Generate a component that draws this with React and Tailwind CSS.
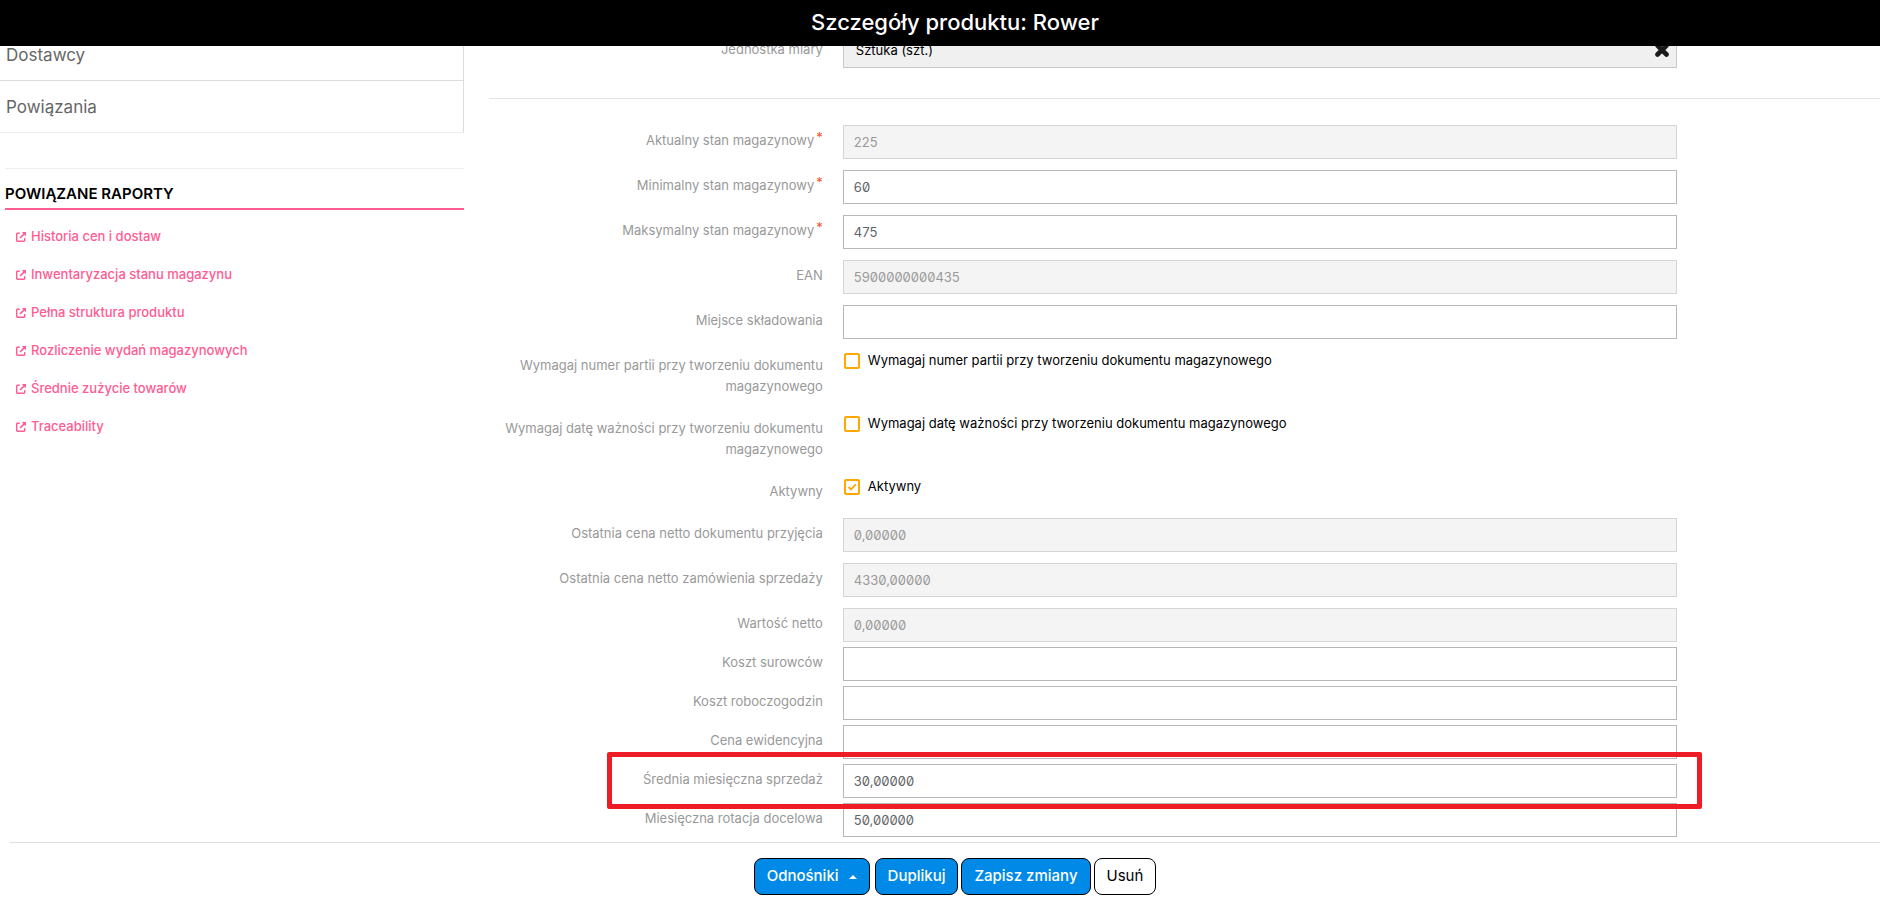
import { useState } from 'react';

const navItems = ['Dostawcy', 'Powiązania'];

const reports = [
  'Historia cen i dostaw',
  'Inwentaryzacja stanu magazynu',
  'Pełna struktura produktu',
  'Rozliczenie wydań magazynowych',
  'Średnie zużycie towarów',
  'Traceability',
];

const stockFields = [
  { id: 'current', label: 'Aktualny stan magazynowy', value: '225', required: true, disabled: true },
  { id: 'min', label: 'Minimalny stan magazynowy', value: '60', required: true },
  { id: 'max', label: 'Maksymalny stan magazynowy', value: '475', required: true },
  { id: 'ean', label: 'EAN', value: '5900000000435', disabled: true },
  { id: 'place', label: 'Miejsce składowania', value: '' },
];

const flags = [
  { id: 'batch', label: 'Wymagaj numer partii przy tworzeniu dokumentu magazynowego', checked: false },
  { id: 'expiry', label: 'Wymagaj datę ważności przy tworzeniu dokumentu magazynowego', checked: false },
  { id: 'active', label: 'Aktywny', checked: true },
];

const priceFields = [
  { id: 'receipt', label: 'Ostatnia cena netto dokumentu przyjęcia', value: '0,00000', disabled: true },
  { id: 'order', label: 'Ostatnia cena netto zamówienia sprzedaży', value: '4330,00000', disabled: true },
  { id: 'net', label: 'Wartość netto', value: '0,00000', disabled: true, tight: true },
  { id: 'materials', label: 'Koszt surowców', value: '', tight: true },
  { id: 'hours', label: 'Koszt roboczogodzin', value: '', tight: true },
  { id: 'record', label: 'Cena ewidencyjna', value: '', tight: true },
  { id: 'sales', label: 'Średnia miesięczna sprzedaż', value: '30,00000', tight: true, marked: true },
  { id: 'rotation', label: 'Miesięczna rotacja docelowa', value: '50,00000', tight: true },
];

const LinkIcon = () => (
  <svg viewBox="0 0 10 10" className="h-2.5 w-2.5 shrink-0" fill="none" stroke="currentColor" aria-hidden="true">
    <path d="M3.8 1.2H1.4Q.7 1.2 .7 1.9V8.6Q.7 9.3 1.4 9.3H8Q8.7 9.3 8.7 8.6V6" strokeWidth="1.4" />
    <path d="M4 6L8.4 1.6" strokeWidth="1.6" />
    <path d="M5.8 0H10V4.2Z" fill="currentColor" stroke="none" />
  </svg>
);

const ClearIcon = () => (
  <svg viewBox="0 0 14 14" className="h-3.5 w-3.5" fill="none" stroke="currentColor" aria-hidden="true">
    <path d="M2.5 2.5L11.5 11.5M11.5 2.5L2.5 11.5" strokeWidth="4.6" strokeLinecap="round" />
  </svg>
);

const Field = ({ field }) => {
  const [value, setValue] = useState(field.value);

  return (
    <div className={`relative grid grid-cols-[24%_60%] gap-x-5 ${field.tight ? 'mb-[5px]' : 'mb-[11px]'}`}>
      <label htmlFor={field.id} className="pt-[5px] text-right text-[13px] leading-[21px] text-[#999]">
        {field.label}
        {field.required && <span className="ml-0.5 align-[3px] leading-none text-[#f0532d]">*</span>}
      </label>
      <input
        id={field.id}
        type="text"
        value={value}
        disabled={field.disabled}
        onChange={(e) => setValue(e.target.value)}
        className="h-[34px] w-full border border-[#b8b8b8] bg-white px-2.5 text-[13px] text-[#5f6468] slashed-zero outline-none disabled:border-[#d5d5d5] disabled:bg-[#f4f4f4] disabled:text-[#999]"
      />
      {field.marked && (
        <div className="pointer-events-none absolute -top-3 right-[178px] -bottom-[11px] left-[118px] z-[1] rounded-xs border-5 border-[#ee1c25]" />
      )}
    </div>
  );
};

const Flag = ({ flag }) => {
  const [checked, setChecked] = useState(flag.checked);

  return (
    <div className="grid grid-cols-[24%_60%] gap-x-5">
      <span className="pt-[5px] pb-4 text-right text-[13px] leading-[21px] text-[#999]">{flag.label}</span>
      <label className="flex h-[21px] items-center gap-2 pl-px text-[13px] text-black">
        <span className="relative flex h-4 w-4 items-center justify-center">
          <input
            type="checkbox"
            checked={checked}
            onChange={(e) => setChecked(e.target.checked)}
            className="h-4 w-4 appearance-none rounded-xs border-2 border-[#ffa800] bg-white"
          />
          {checked && (
            <svg viewBox="0 0 16 16" className="pointer-events-none absolute inset-0" fill="none" stroke="#ffa800" strokeWidth="1.8">
              <path d="M4.5 8L7 10.4L11.8 5.4" />
            </svg>
          )}
        </span>
        {flag.label}
      </label>
    </div>
  );
};

const App = () => {
  return (
    <div className="bg-white font-['Inter','Liberation_Sans',sans-serif]">
      <header className="fixed inset-x-0 top-0 z-10 flex h-[46px] items-center justify-center bg-black pb-0.5 pl-[30px]">
        <h1 className="text-[22px] font-medium text-white">Szczegóły produktu: Rower</h1>
      </header>

      <div className="flex pb-[59px]">
        <aside className="w-1/4 pt-[29px] pr-1.5">
          <nav>
            {navItems.map((item) => (
              <a
                key={item}
                href="#"
                className="flex h-[52px] items-center border-r border-b border-[#ddd] pt-0.5 pl-1.5 text-[17px] text-[#666] last:border-b-[#eee]"
              >
                {item}
              </a>
            ))}
          </nav>
          <section className="mt-[35px] ml-[5px] border-t border-[#eee]">
            <h2 className="border-b-2 border-[#ff5c93] pt-3.5 pb-[3px] text-[15px] leading-[22px] font-semibold text-black">
              POWIĄZANE RAPORTY
            </h2>
            <ul className="pt-2 pl-[11px]">
              {reports.map((report) => (
                <li key={report}>
                  <a href="#" className="flex h-[38px] items-center gap-[5px] text-[13px] font-medium text-[#ff5c93]">
                    <LinkIcon />
                    {report}
                  </a>
                </li>
              ))}
            </ul>
          </section>
        </aside>

        <main className="flex-1 pt-[34px] pl-[19px]">
          <div className="mb-[30px] grid grid-cols-[24%_60%] gap-x-5">
            <label htmlFor="unit" className="pt-[5px] text-right text-[13px] leading-[21px] text-[#999]">
              Jednostka miary
            </label>
            <div className="relative">
              <select
                id="unit"
                className="block h-[34px] w-full appearance-none border border-[#c8c8c8] bg-[#f0f0f0] px-3 text-[13px] text-black"
              >
                <option>Sztuka (szt.)</option>
              </select>
              <button aria-label="Wyczyść" className="absolute top-[9px] right-2 text-[#1a1a1a]">
                <ClearIcon />
              </button>
            </div>
          </div>

          <hr className="mb-[26px] border-[#e3e3e3]" />

          {stockFields.map((field) => (
            <Field key={field.id} field={field} />
          ))}
          {flags.map((flag) => (
            <Flag key={flag.id} flag={flag} />
          ))}
          {priceFields.map((field) => (
            <Field key={field.id} field={field} />
          ))}
        </main>
      </div>

      <footer className="fixed inset-x-0 bottom-0 z-10 bg-white pl-2.5">
        <div className="flex justify-center gap-[3px] border-t border-[#ddd] pt-[15px] pb-1.5 pl-5 text-[15px] font-medium">
          <button className="mr-0.5 flex h-[37px] items-center gap-2.5 rounded-lg border border-black bg-[#0089e7] px-3 text-white">
            Odnośniki
            <svg viewBox="0 0 8 4" className="h-1 w-2" fill="currentColor" aria-hidden="true">
              <path d="M0 4L4 0L8 4Z" />
            </svg>
          </button>
          <button className="h-[37px] rounded-lg border border-black bg-[#0089e7] px-3 text-white">Duplikuj</button>
          <button className="h-[37px] rounded-lg border border-black bg-[#0089e7] px-3 text-white">Zapisz zmiany</button>
          <button className="h-[37px] rounded-lg border border-black bg-white px-3 font-normal text-black">Usuń</button>
        </div>
      </footer>
    </div>
  );
};

export default App;
